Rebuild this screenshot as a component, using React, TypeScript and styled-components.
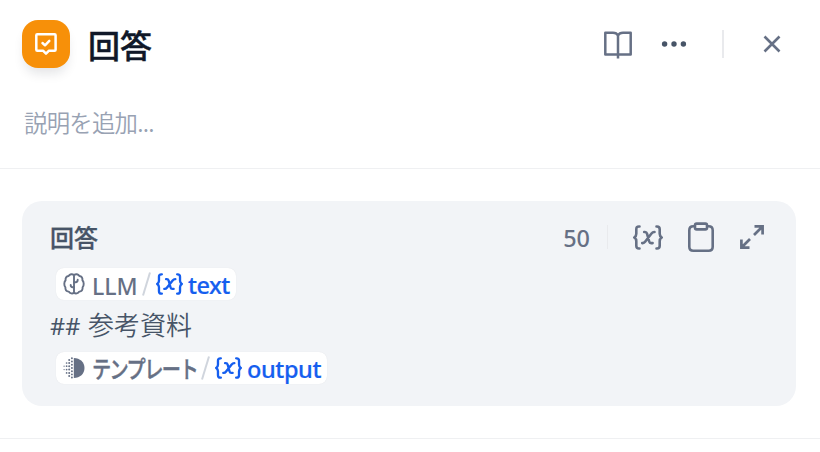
import React from 'react';
import styled, { createGlobalStyle } from 'styled-components';

const Global = createGlobalStyle`
  * { box-sizing: border-box; }
  body { margin: 0; background: #fff; font-family: "Noto Sans", "Noto Sans CJK JP", sans-serif; }
  svg { display: block; flex: none; }
`;

const Panel = styled.div`
  width: 820px;
  height: 452px;
  overflow: hidden;
  background: #fff;
`;

const Header = styled.header`
  height: 169px;
  padding: 20px 24px 0 22px;
  border-bottom: 1px solid #eff0f2;
`;

const TitleRow = styled.div`
  display: flex;
  align-items: center;
  height: 48px;
`;

const Badge = styled.div`
  display: flex;
  align-items: center;
  justify-content: center;
  width: 48px;
  height: 48px;
  border-radius: 16px;
  background: #f79009;
  box-shadow: 0 8px 12px -3px rgba(16, 24, 40, 0.12);
`;

const Title = styled.h1`
  flex: 1;
  margin: 0 0 0 18px;
  font: 500 32px/44px "Noto Sans CJK JP", sans-serif;
  -webkit-text-stroke: 0.4px #101828;
  color: #101828;
`;

const HeaderActions = styled.div`
  display: flex;
  align-items: center;
  margin-right: 15px;
  color: #667085;
`;

const BookSlot = styled.div`
  margin-right: 28px;
  padding-top: 2px;
`;

const Separator = styled.div<{ $height: number; $gap: string; $wide?: boolean }>`
  width: ${(p) => (p.$wide ? 2 : 1)}px;
  height: ${(p) => p.$height}px;
  margin: ${(p) => p.$gap};
  background: #e9eaed;
`;

const Description = styled.p`
  margin: 37px 0 0 2px;
  font: 350 23.4px/34px "Noto Sans CJK JP", sans-serif;
  letter-spacing: -0.75px;
  color: #98a2b3;
`;

const Body = styled.section`
  height: 270px;
  padding: 32px 24px 0 22px;
  border-bottom: 1px solid #eff0f2;
`;

const Editor = styled.div`
  height: 205px;
  padding: 18px 31px 0 28px;
  border-radius: 20px;
  background: #f2f4f7;
`;

const EditorBar = styled.div`
  display: flex;
  align-items: center;
  height: 36px;
  color: #667085;
`;

const EditorTitle = styled.h2`
  flex: 1;
  margin: 0;
  font: 500 24px/36px "Noto Sans CJK JP", sans-serif;
  -webkit-text-stroke: 0.3px #475467;
  color: #475467;
`;

const Count = styled.span`
  padding-top: 2px;
  font: 500 23.4px/36px "Noto Sans", sans-serif;
`;

const Tools = styled.div`
  display: flex;
  align-items: center;
  gap: 25px;
`;

const Content = styled.div`
  padding-top: 13px;
`;

const Chip = styled.div<{ $width: number }>`
  display: flex;
  align-items: center;
  width: ${(p) => p.$width}px;
  height: 32px;
  margin-left: 6px;
  padding-left: 7px;
  border-radius: 8px;
  background: #fff;
  box-shadow: 0 0 1px rgba(16, 24, 40, 0.1);
  white-space: nowrap;
`;

const Source = styled.span<{ $width: number; $condensed?: boolean }>`
  width: ${(p) => p.$width}px;
  margin-left: 7px;
  padding-top: 3px;
  font: 500 23px/32px "Noto Sans", "Noto Sans CJK JP", sans-serif;
  color: #667085;
  ${(p) =>
    p.$condensed &&
    `
    padding-top: 1px;
    font-size: 24px;
    letter-spacing: -2px;
    -webkit-text-stroke: 0.4px #667085;
    transform: scaleX(0.8);
    transform-origin: left;
  `}
`;

const Field = styled.span<{ $spacing: number }>`
  margin-left: 5px;
  padding-top: 2px;
  font: 500 23.5px/32px "Noto Sans", sans-serif;
  letter-spacing: ${(p) => p.$spacing}px;
  -webkit-text-stroke: 0.2px #155eef;
  color: #155eef;
`;

const Line = styled.div`
  height: 52px;
  font: 350 26px/47px "Noto Sans CJK JP", sans-serif;
  color: #475467;
`;

const Hashes = styled.span`
  display: inline-block;
  width: 38px;
  font: 400 23.5px/47px "Noto Sans", sans-serif;
`;

const VariableSlot = styled.div`
  padding-bottom: 1px;
  color: #155eef;
`;

const Answer = () => (
  <svg width="24" height="24" viewBox="0 0 24 24" fill="none" stroke="#fff" strokeWidth="2.5" strokeLinejoin="round" strokeLinecap="round">
    <path d="M3.300 2.300h17.300c.5 0 1 .5 1 1v14.400c0 .6-.5 1-1 1H15l-3 3-3-3H3.300c-.6 0-1-.4-1-1V3.300c0-.5.400-1 1-1Z" />
    <path d="m8.500 11 2.500 2.300 4.300-4.400" />
  </svg>
);

const Book = () => (
  <svg width="30" height="30" viewBox="0 0 30 30" fill="none" stroke="currentColor" strokeWidth="2.5" strokeLinejoin="round">
    <path d="M15 5.500C14 3.500 12 2.700 10 2.700H2.300v21.800H15m0-19c1-2 3-2.800 5-2.800h7.700v21.800H15M15 5v23.500" />
  </svg>
);

const Dots = () => (
  <svg width="26" height="8" viewBox="0 0 26 8" fill="#475467">
    <circle cx="3.600" cy="4" r="2.700" />
    <circle cx="13" cy="4" r="2.700" />
    <circle cx="22.400" cy="4" r="2.700" />
  </svg>
);

const Close = () => (
  <svg width="18" height="18" viewBox="0 0 18 18" fill="none" stroke="currentColor" strokeWidth="2.600">
    <path d="m1.500 1.500 15 15m0-15-15 15" />
  </svg>
);

const Variable = ({ width = 30, height = 25 }: { width?: number; height?: number }) => (
  <svg width={width} height={height} viewBox="0 0 30 25" preserveAspectRatio="none" fill="none" stroke="currentColor" strokeWidth="2.600" strokeLinecap="round" strokeLinejoin="round">
    <path d="M6.500 1.500H6c-2 0-2.700 1-2.700 2.800v4.500c0 1.700-.6 2.800-2 3.700 1.400.9 2 2 2 3.700v4.500c0 1.800.7 2.800 2.700 2.800h.5M23.500 1.500h.5c2 0 2.700 1 2.700 2.800v4.500c0 1.700.6 2.800 2 3.700-1.400.9-2 2-2 3.700v4.500c0 1.800-.7 2.800-2.700 2.800h-.5" />
    <path d="M11.200 7h.8c1.100 0 1.700.5 2 1.600l2.200 7.900c.3 1.100.9 1.600 1.900 1.600h1.500M21.500 7h-.3c-1.100 0-1.900.5-2.700 1.500l-6.200 8c-.8 1.100-1.500 1.600-2.600 1.600h-.5" />
  </svg>
);

const Clipboard = () => (
  <svg width="26" height="31" viewBox="0 0 26 31" fill="none" stroke="currentColor" strokeWidth="2.600" strokeLinejoin="round">
    <path d="M7 4.300H5.300c-2.700 0-4 1.300-4 4v16.400c0 2.700 1.300 4 4 4h15.400c2.700 0 4-1.300 4-4V8.300c0-2.700-1.300-4-4-4H19" />
    <rect x="7" y="1.600" width="12" height="5.800" rx="1.600" />
  </svg>
);

const Expand = () => (
  <svg width="26" height="26" viewBox="0 0 26 26" fill="none" stroke="currentColor" strokeWidth="2.700">
    <path d="M15.500 2.400h8.100v8.100M23 3l-8 8M2.400 15.500v8.100h8.100M3 23l8-8" />
  </svg>
);

const Brain = () => (
  <svg width="22" height="22" viewBox="0 0 22 22" fill="none" stroke="#667085" strokeWidth="1.900" strokeLinecap="round" strokeLinejoin="round">
    <path d="M11 2C9.300.800 6.800 1 5.600 3 3.400 3.200 2.200 5 2.600 7.200.9 8.800.9 12.600 2.400 14.300c-.2 2.400 1 4.100 3.300 4.300 1.300 2 3.700 2.400 5.300 1.200 1.600 1.200 4 .800 5.300-1.200 2.300-.2 3.500-1.900 3.300-4.300 1.500-1.700 1.500-5.500-.2-7.100.4-2.200-.8-4-3-4.200C15.200 1 12.700.800 11 2ZM11 2v17.800" />
    <path d="M11 9.200h1.700c1.300 0 2-.9 2-2.400M11 14.200H9.700c-1.200 0-2-.8-2-2.200" />
  </svg>
);

const columns = [
  { x: 1.1, r: 0.65, ys: [9.200, 12.600] },
  { x: 3.600, r: 0.85, ys: [6, 9.200, 12.600, 15.900] },
  { x: 6.200, r: 1, ys: [3, 6, 9.200, 12.600, 15.900, 19] },
  { x: 8.900, r: 0.95, ys: [1.300, 4.500, 7.700, 11, 14.200, 17.400, 20.500] },
];

const Template = () => (
  <svg width="22" height="22" viewBox="0 0 22 22" fill="#667085">
    <path d="M10.800 1C17 1 21.500 5.300 21.500 11S17 21 10.800 21Z" />
    {columns.map((c) => c.ys.map((y) => <circle key={`${c.x}-${y}`} cx={c.x} cy={y} r={c.r} />))}
  </svg>
);

const SlashMark = styled.svg`
  margin: 0 5px;
`;

const Slash = () => (
  <SlashMark width="9" height="24" viewBox="0 0 9 24" fill="none" stroke="#d0d5dd" strokeWidth="2">
    <path d="M8 .5 1 23.500" />
  </SlashMark>
);

export default function App() {
  return (
    <Panel>
      <Global />
      <Header>
        <TitleRow>
          <Badge><Answer /></Badge>
          <Title>回答</Title>
          <HeaderActions>
            <BookSlot><Book /></BookSlot>
            <Dots />
            <Separator $height={28} $gap="0 39px 0 35px" $wide />
            <Close />
          </HeaderActions>
        </TitleRow>
        <Description>説明を追加...</Description>
      </Header>
      <Body>
        <Editor>
          <EditorBar>
            <EditorTitle>回答</EditorTitle>
            <Count>50</Count>
            <Separator $height={24} $gap="0 25px 0 17px" />
            <Tools>
              <Variable />
              <Clipboard />
              <Expand />
            </Tools>
          </EditorBar>
          <Content>
            <Chip $width={180}>
              <Brain />
              <Source $width={45}>LLM</Source>
              <Slash />
              <VariableSlot><Variable width={27} height={22} /></VariableSlot>
              <Field $spacing={-0.5}>text</Field>
            </Chip>
            <Line><Hashes>##</Hashes>参考資料</Line>
            <Chip $width={271}>
              <Template />
              <Source $width={104} $condensed>テンプレート</Source>
              <Slash />
              <VariableSlot><Variable width={27} height={22} /></VariableSlot>
              <Field $spacing={-0.4}>output</Field>
            </Chip>
          </Content>
        </Editor>
      </Body>
    </Panel>
  );
}
